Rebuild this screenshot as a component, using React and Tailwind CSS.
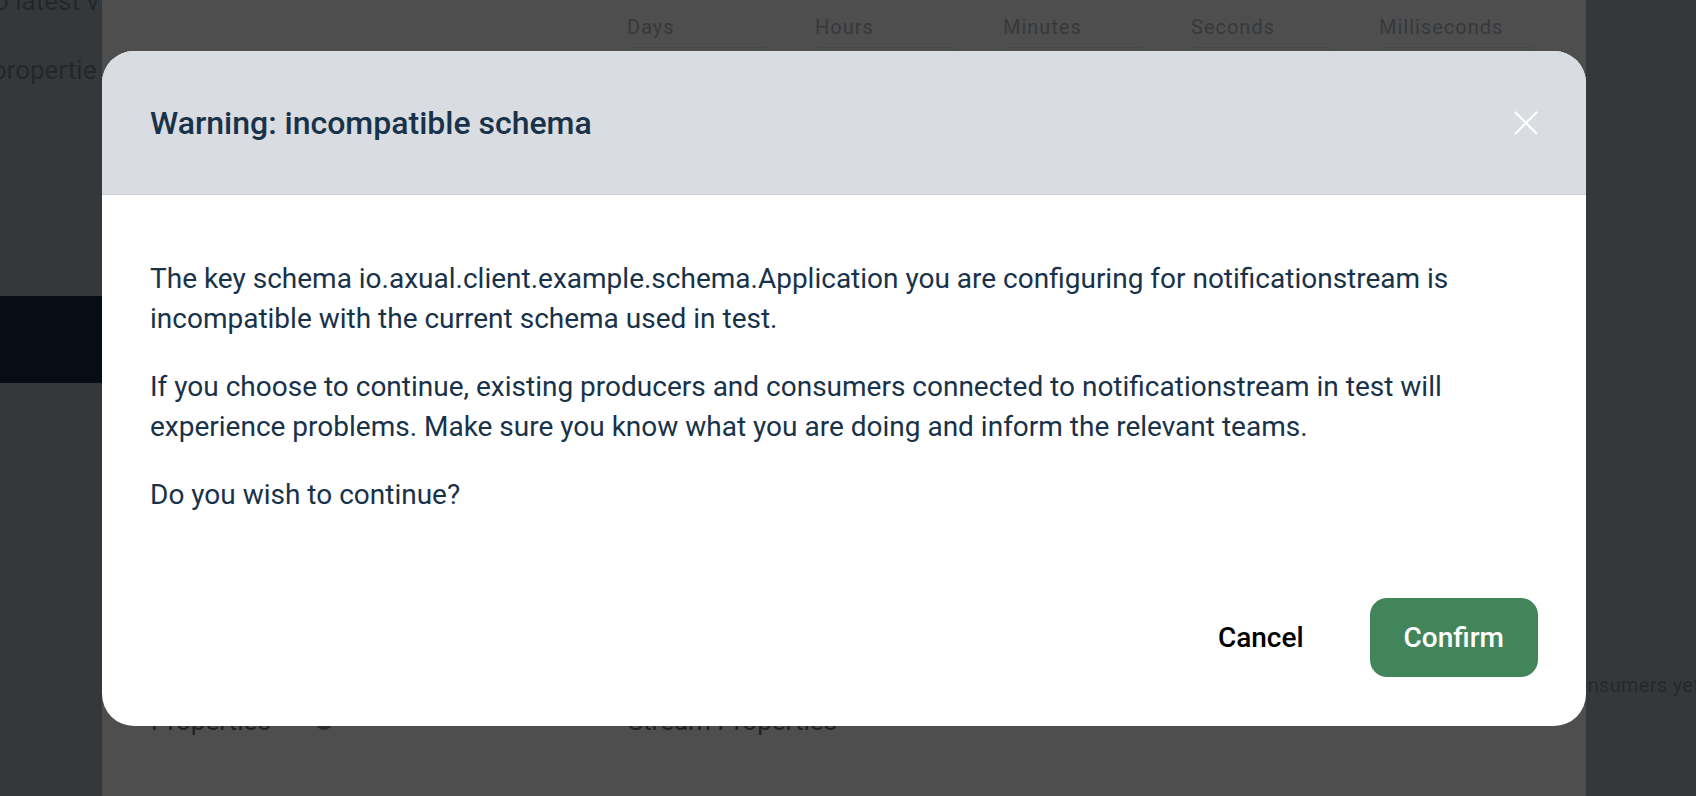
import React from 'react';

const fields = [
  { label: 'Days', w: 'w-[142px]' },
  { label: 'Hours', w: 'w-[142px]' },
  { label: 'Minutes', w: 'w-[142px]' },
  { label: 'Seconds', w: 'w-[142px]' },
  { label: 'Milliseconds', w: 'w-[157px]' },
];

function CloseIcon() {
  return (
    <svg width="24" height="24" viewBox="0 0 24 24" fill="none" stroke="white" strokeWidth="2.2" strokeLinecap="round">
      <path d="M1.5 1.5L22.5 22.5" />
      <path d="M22.5 1.5L1.5 22.5" />
    </svg>
  );
}

export default function App() {
  return (
    <div className="relative flex w-[1696px] h-[796px] overflow-hidden font-['Roboto',sans-serif]">
      {/* page behind the dialog, already dimmed */}
      <aside className="w-[102px] shrink-0 bg-[#35383b] overflow-hidden flex flex-col">
        <div className="whitespace-nowrap text-[26px] leading-[26px] text-[#24272a] mt-[-12px] ml-[-6px]">o latest v</div>
        <div className="whitespace-nowrap text-[26px] leading-[26px] text-[#24272a] mt-[43px] ml-[-8px]">propertie</div>
        <div className="mt-[213px] h-[87px] bg-[#060d14]"></div>
      </aside>

      <main className="w-[1484px] shrink-0 bg-[#4e4e4e] flex flex-col">
        <div className="flex gap-[46px] pl-[525px] pt-[15px]">
          {fields.map((f) => (
            <div key={f.label} className="flex flex-col gap-[8px]">
              <span className="text-[20px] leading-[24px] tracking-[1px] text-[#36393c]">{f.label}</span>
              <div className={`${f.w} h-[40px] rounded-[6px] border border-[#45474a]`}></div>
            </div>
          ))}
        </div>
        <div className="mt-auto mb-[60px] flex items-center pl-[49px]">
          <span className="text-[26px] leading-[30px] text-[#1f2123]">Properties</span>
          <span className="ml-[44px] w-[18px] h-[18px] rounded-full bg-[#2a2c2f]"></span>
          <span className="ml-[295px] text-[26px] leading-[30px] text-[#1f2123]">Stream Properties</span>
        </div>
      </main>

      <div className="flex-1 bg-[#35383b] overflow-hidden">
        <div className="mt-[673px] ml-[-10px] whitespace-nowrap text-[20px] leading-[24px] tracking-[0.3px] text-[#26292c]">onsumers yet</div>
      </div>

      {/* dialog */}
      <div className="absolute left-[102px] top-[51px] w-[1484px] rounded-[32px] overflow-hidden bg-white">
        <div className="h-[144px] flex items-center justify-between px-12 bg-[#d9dce0] border-b border-[#cdd1d6]">
          <h2 className="text-[32px] font-medium text-[#18324a]">Warning: incompatible schema</h2>
          <button className="flex items-center justify-center">
            <CloseIcon />
          </button>
        </div>
        <div className="px-12 pt-16 pb-[49px] text-[28px] leading-[40px] text-[#18324a]">
          <p>The key schema io.axual.client.example.schema.Application you are configuring for notificationstream is incompatible with the current schema used in test.</p>
          <p className="mt-7">If you choose to continue, existing producers and consumers connected to notificationstream in test will experience problems. Make sure you know what you are doing and inform the relevant teams.</p>
          <p className="mt-7">Do you wish to continue?</p>
          <div className="mt-[83px] flex justify-end items-center gap-8">
            <button className="h-[79px] px-[34px] rounded-[17px] text-[28px] font-medium text-black">Cancel</button>
            <button className="h-[79px] px-[34px] rounded-[17px] bg-[#42855b] text-[28px] font-medium text-white">Confirm</button>
          </div>
        </div>
      </div>
    </div>
  );
}
